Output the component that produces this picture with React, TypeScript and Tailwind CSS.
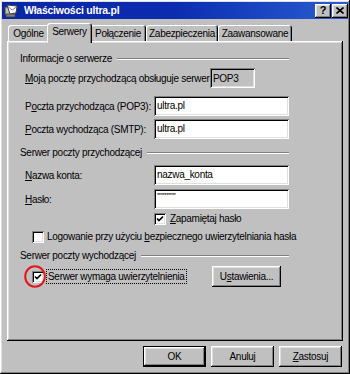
import { ReactNode } from "react";

const raised =
  "shadow-[inset_-1px_-1px_0_#000,inset_1px_1px_0_#fff,inset_-2px_-2px_0_#808080,inset_2px_2px_0_#dfdfdf]";
const sunken =
  "shadow-[inset_1px_1px_0_#808080,inset_-1px_-1px_0_#fff,inset_2px_2px_0_#000,inset_-2px_-2px_0_#dfdfdf]";

function Etched() {
  return <div className="flex-1 h-[2px] border-t border-b border-t-[#808080] border-b-white" />;
}

function GroupHeader({ children }: { children: ReactNode }) {
  return (
    <div className="flex items-center h-[13px] gap-[5px]">
      <span className="whitespace-nowrap leading-[13px]">{children}</span>
      <Etched />
    </div>
  );
}

function Input({ value, className = "" }: { value: string; className?: string }) {
  return (
    <div className={`w-[135px] h-[20px] bg-white ${sunken} flex items-center pl-[3px] ${className}`}>
      <span className="leading-none">{value}</span>
    </div>
  );
}

function Checkbox({ checked }: { checked?: boolean }) {
  return (
    <div className={`relative w-[12px] h-[12px] bg-white shrink-0 ${sunken}`}>
      {checked && (
        <svg className="absolute left-[2px] top-[2px]" width="8" height="8" viewBox="0 0 8 8">
          <path d="M1 3.5 L3 5.5 L7 1.5" stroke="#000" strokeWidth="1.6" fill="none" />
        </svg>
      )}
    </div>
  );
}

function Field({ label, value, className = "" }: { label: ReactNode; value: string; className?: string }) {
  return (
    <div className={`flex items-center pl-[5px] ${className}`}>
      <span className="w-[129px] shrink-0 whitespace-nowrap">{label}</span>
      <Input value={value} />
    </div>
  );
}

function Tab({ label, selected, w }: { label: ReactNode; selected?: boolean; w: string }) {
  if (selected) {
    return (
      <div
        className={`relative z-10 -mx-[2px] -mb-[2px] h-[20px] ${w} bg-[#c0c0c0] rounded-t-[3px] flex items-center justify-center pb-[3px] shadow-[inset_1px_1px_0_#fff,inset_-1px_0_0_#000,inset_-2px_0_0_#808080]`}
      >
        {label}
      </div>
    );
  }
  return (
    <div
      className={`h-[16px] ${w} rounded-t-[3px] flex items-center justify-center whitespace-nowrap shadow-[inset_1px_1px_0_#fff,inset_-1px_0_0_#000,inset_-2px_0_0_#808080]`}
    >
      {label}
    </div>
  );
}

function Button({ children, w, isDefault }: { children: ReactNode; w: string; isDefault?: boolean }) {
  const bevel = isDefault
    ? "shadow-[inset_0_0_0_1px_#000,inset_-2px_-2px_0_#000,inset_2px_2px_0_#fff,inset_-3px_-3px_0_#808080,inset_3px_3px_0_#dfdfdf]"
    : raised;
  return <div className={`${w} h-[21px] bg-[#c0c0c0] ${bevel} flex items-center justify-center`}>{children}</div>;
}

export default function App() {
  return (
    <div
      className={`w-[350px] h-[374px] bg-[#c0c0c0] p-[2px] text-black text-[10px] tracking-[-0.3px] ${raised}`}
      style={{ fontFamily: '"Liberation Sans", Arial, sans-serif' }}
    >
      {/* title bar */}
      <div className="h-[17px] bg-gradient-to-r from-[#0a26a6] via-[#0c2cb0] to-[#2c5cd0] flex items-center pl-[2px]">
        <svg width="15" height="14" viewBox="0 0 15 14" className="shrink-0">
          <rect x="1" y="3" width="10" height="8" fill="#c0c0c0" stroke="#404040" strokeWidth="1" />
          <path d="M3 1 L13 2 L12 9 L6 10 Z" fill="#fff" stroke="#404040" strokeWidth="1" />
          <path d="M4 2.5 L8 6 L12.5 3" stroke="#808080" fill="none" strokeWidth="1" />
          <rect x="2" y="10" width="9" height="3" fill="#808080" stroke="#404040" strokeWidth="0.8" />
        </svg>
        <span className="ml-[5px] text-white font-bold text-[10.5px] tracking-[-0.25px] leading-none">
          Właściwości ultra.pl
        </span>
        <div className="ml-auto flex gap-[1px]">
          <div
            className={`w-[16px] h-[14px] bg-[#c0c0c0] ${raised} flex items-center justify-center font-bold text-[11px] leading-none tracking-normal`}
          >
            ?
          </div>
          <div className={`w-[16px] h-[14px] bg-[#c0c0c0] ${raised} flex items-center justify-center`}>
            <svg width="8" height="7" viewBox="0 0 8 7">
              <path d="M0.5 0.5 L7.5 6.5 M7.5 0.5 L0.5 6.5" stroke="#000" strokeWidth="1.6" />
            </svg>
          </div>
        </div>
      </div>

      {/* body */}
      <div className="px-[5px] mt-[4px]">
        <div className="flex items-end h-[18px] pl-[1px]">
          <Tab w="w-[41px]" label="Ogólne" />
          <Tab w="w-[45px]" selected label="Serwery" />
          <Tab w="w-[56px]" label="Połączenie" />
          <Tab w="w-[72px]" label="Zabezpieczenia" />
          <Tab w="w-[74px]" label="Zaawansowane" />
        </div>

        <div className={`w-[336px] h-[300px] ${raised} pl-[13px] pr-[54px] pt-[11px]`}>
          <GroupHeader>Informacje o serwerze</GroupHeader>

          <div className="flex items-center pl-[5px] mt-[3px]">
            <span className="w-[185px] shrink-0 whitespace-nowrap">
              <u>M</u>oją pocztę przychodzącą obsługuje serwer:
            </span>
            <div className={`w-[45px] h-[20px] ${sunken} flex items-center pl-[3px]`}>POP3</div>
          </div>

          <Field
            className="mt-[8px]"
            label={
              <>
                P<u>o</u>czta przychodząca (POP3):
              </>
            }
            value="ultra.pl"
          />
          <Field
            className="mt-[3px]"
            label={
              <>
                <u>P</u>oczta wychodząca (SMTP):
              </>
            }
            value="ultra.pl"
          />

          <div className="mt-[7px]">
            <GroupHeader>Serwer poczty przychodzącej</GroupHeader>
          </div>

          <Field
            className="mt-[6px]"
            label={
              <>
                <u>N</u>azwa konta:
              </>
            }
            value="nazwa_konta"
          />
          <div className="flex items-center pl-[5px] mt-[4px]">
            <span className="w-[129px] shrink-0">
              <u>H</u>asło:
            </span>
            <div className={`w-[135px] h-[20px] bg-white ${sunken} flex items-start pl-[3px] pt-[3px]`}>
              <span className="text-[6px] leading-none tracking-[-0.5px]">**********</span>
            </div>
          </div>

          <div className="flex items-center ml-[134px] mt-[3px] h-[13px] gap-[4px]">
            <Checkbox checked />
            <span className="whitespace-nowrap">
              <u>Z</u>apamiętaj hasło
            </span>
          </div>

          <div className="flex items-center ml-[12px] mt-[5px] h-[13px] gap-[3px]">
            <Checkbox />
            <span className="whitespace-nowrap">
              Logowanie przy użyciu <u>b</u>ezpiecznego uwierzytelniania hasła
            </span>
          </div>

          <div className="mt-[6px]">
            <GroupHeader>Serwer poczty wychodzącej</GroupHeader>
          </div>

          <div className="flex items-center ml-[12px] mt-[4px] h-[21px] pr-[8px]">
            <div className="relative">
              <Checkbox checked />
              <svg className="absolute -left-[8px] -top-[6px]" width="22" height="23" viewBox="0 0 22 23">
                <ellipse cx="11" cy="11.5" rx="9.8" ry="10.2" stroke="#e01818" strokeWidth="2" fill="none" />
              </svg>
            </div>
            <span className="ml-[2px] border border-dotted border-black px-[1px] leading-[13px] whitespace-nowrap">
              Serwer wymaga uwierzytelnienia
            </span>
            <div className="ml-auto">
              <Button w="w-[69px]">
                U<u>s</u>tawienia...
              </Button>
            </div>
          </div>
        </div>

        <div className="flex justify-end gap-[5px] mt-[5px] pr-[1px]">
          <Button w="w-[63px]" isDefault>
            OK
          </Button>
          <Button w="w-[63px]">Anuluj</Button>
          <Button w="w-[63px]">
            <u>Z</u>astosuj
          </Button>
        </div>
      </div>
    </div>
  );
}
